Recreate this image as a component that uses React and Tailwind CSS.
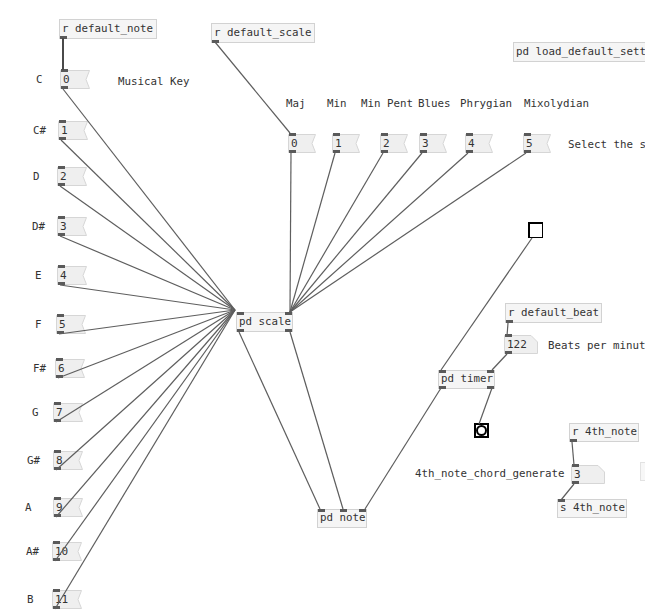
import React from 'react';

const mono = { fontFamily: '"DejaVu Sans Mono", "Liberation Mono", monospace' };

// Notes de gauche : libellé, x/y de la boîte, x du libellé
const notes = [
  ['C', 60, 70, 36],
  ['C#', 58, 121, 33],
  ['D', 57, 167, 33],
  ['D#', 57, 217, 32],
  ['E', 57, 266, 35],
  ['F', 56, 315, 35],
  ['F#', 55, 359, 33],
  ['G', 53, 403, 32],
  ['G#', 53, 451, 27],
  ['A', 53, 498, 25],
  ['A#', 52, 542, 26],
  ['B', 52, 590, 27],
];

const scales = [
  ['Maj', 286, 288],
  ['Min', 327, 332],
  ['Min Pent', 361, 380],
  ['Blues', 418, 419],
  ['Phrygian', 460, 465],
  ['Mixolydian', 524, 523],
];

function Iolet({ left, top }) {
  return <div className="absolute h-[3px] w-[7px] bg-[#5a5a5a]" style={{ left, top }} />;
}

function Obj({ x, y, w, h = 20, text, inlets = [0], outlets = [0] }) {
  return (
    <div
      className="absolute border border-[#d2d2d2] bg-[#f5f5f5] text-[10.8px] leading-none text-[#333]"
      style={{ left: x, top: y, width: w, height: h }}
    >
      <div className="flex h-full items-center pl-[2px] whitespace-nowrap overflow-hidden" style={mono}>
        {text}
      </div>
      {inlets.map((o, i) => (
        <Iolet key={'i' + i} left={o === 'r' ? w - 9 : o} top={-1} />
      ))}
      {outlets.map((o, i) => (
        <Iolet key={'o' + i} left={o === 'r' ? w - 9 : o} top={h - 4} />
      ))}
    </div>
  );
}

function Num({ x, y, w = 30, h = 19, val, corner = false }) {
  const shape = corner
    ? `M0.5 0.5 H${w - 7} L${w - 0.5} 7 V${h - 0.5} H0.5 Z`
    : `M0.5 0.5 H${w - 0.5} L${w - 4} ${h / 2} L${w - 0.5} ${h - 0.5} H0.5 Z`;
  return (
    <div className="absolute text-[11px] leading-none text-[#333]" style={{ left: x, top: y, width: w, height: h }}>
      <svg className="absolute inset-0" width={w} height={h}>
        <path d={shape} fill="#efefef" stroke="#d6d6d6" />
      </svg>
      <div className="relative flex h-full items-center pl-[3px]" style={mono}>
        {val}
      </div>
      <Iolet left={1} top={-1} />
      <Iolet left={1} top={h - 3} />
    </div>
  );
}

function Label({ x, y, children }) {
  return (
    <div className="absolute whitespace-nowrap text-[10.8px] leading-none text-[#333]" style={{ left: x, top: y, ...mono }}>
      {children}
    </div>
  );
}

export default function App() {
  const hub = [235, 310];
  const scaleIn = [290, 312];

  const lines = [
    [215, 42, 290, 133],
    ...notes.map(([, x, y]) => [x + 3, y + 19, hub[0], hub[1]]),
    ...scales.map(([, , bx]) => [bx + 3, 153, scaleIn[0], scaleIn[1]]),
    [239, 332, 320, 509],
    [290, 332, 343, 509],
    [441, 388, 365, 509],
    [532, 238, 441, 370],
    [508, 323, 507, 336],
    [507, 354, 492, 370],
    [492, 388, 479, 424],
    [572, 442, 574, 465],
    [574, 484, 561, 500],
  ];

  return (
    <div className="relative h-[615px] w-[645px] overflow-hidden bg-white" style={mono}>
      <Obj x={59} y={19} w={98} text="r default_note" inlets={[]} />
      <Obj x={211} y={23} w={104} text="r default_scale" inlets={[]} />
      <Obj x={513} y={42} w={150} text="pd load_default_settings" inlets={[]} outlets={[]} />

      <Label x={118} y={77}>Musical Key</Label>

      {notes.map(([n, x, y, lx], i) => (
        <React.Fragment key={n}>
          <Label x={lx} y={y + 5}>{n}</Label>
          <Num x={x} y={y} val={i} />
        </React.Fragment>
      ))}

      {scales.map(([s, lx, bx], i) => (
        <React.Fragment key={s}>
          <Label x={lx} y={99}>{s}</Label>
          <Num x={bx} y={134} w={28} val={i} />
        </React.Fragment>
      ))}
      <Label x={568} y={140}>Select the scale</Label>

      <Obj x={236} y={312} w={57} text="pd scale" inlets={[0, 'r']} outlets={[0, 'r']} />

      <div className="absolute h-4 w-[15px] border border-black border-t-2 border-l-2" style={{ left: 528, top: 222 }} />

      <Obj x={505} y={303} w={97} text="r default_beat" inlets={[]} />
      <Num x={504} y={335} w={34} h={19} val="122" corner />
      <Label x={548} y={341}>Beats per minute</Label>

      <Obj x={438} y={370} w={57} h={19} text="pd timer" inlets={[0, 'r']} outlets={[0, 'r']} />

      <div
        className="absolute flex h-[15px] w-[15px] items-center justify-center border-2 border-black"
        style={{ left: 474, top: 423 }}
      >
        <div className="h-[11px] w-[11px] rounded-full border-2 border-black" />
      </div>

      <Obj x={569} y={423} w={70} h={19} text="r 4th_note" inlets={[]} />
      <Label x={415} y={469}>4th_note_chord_generate</Label>
      <Num x={571} y={465} w={34} h={19} val="3" corner />
      <Obj x={557} y={499} w={70} h={19} text="s 4th_note" outlets={[]} />
      <div className="absolute h-[19px] w-[10px] border border-[#e2e2e2] bg-[#f7f7f7]" style={{ left: 640, top: 462 }} />

      <Obj x={317} y={509} w={50} h={19} text="pd note" inlets={[0, 22, 'r']} outlets={[]} />

      <svg className="pointer-events-none absolute inset-0" width={645} height={615}>
        {lines.map(([x1, y1, x2, y2], i) => (
          <line key={i} x1={x1} y1={y1} x2={x2} y2={y2} stroke="#5e5e5e" strokeWidth={1.2} />
        ))}
        <line x1={63} y1={38} x2={63} y2={70} stroke="#4a4a4a" strokeWidth={2} />
      </svg>
    </div>
  );
}
